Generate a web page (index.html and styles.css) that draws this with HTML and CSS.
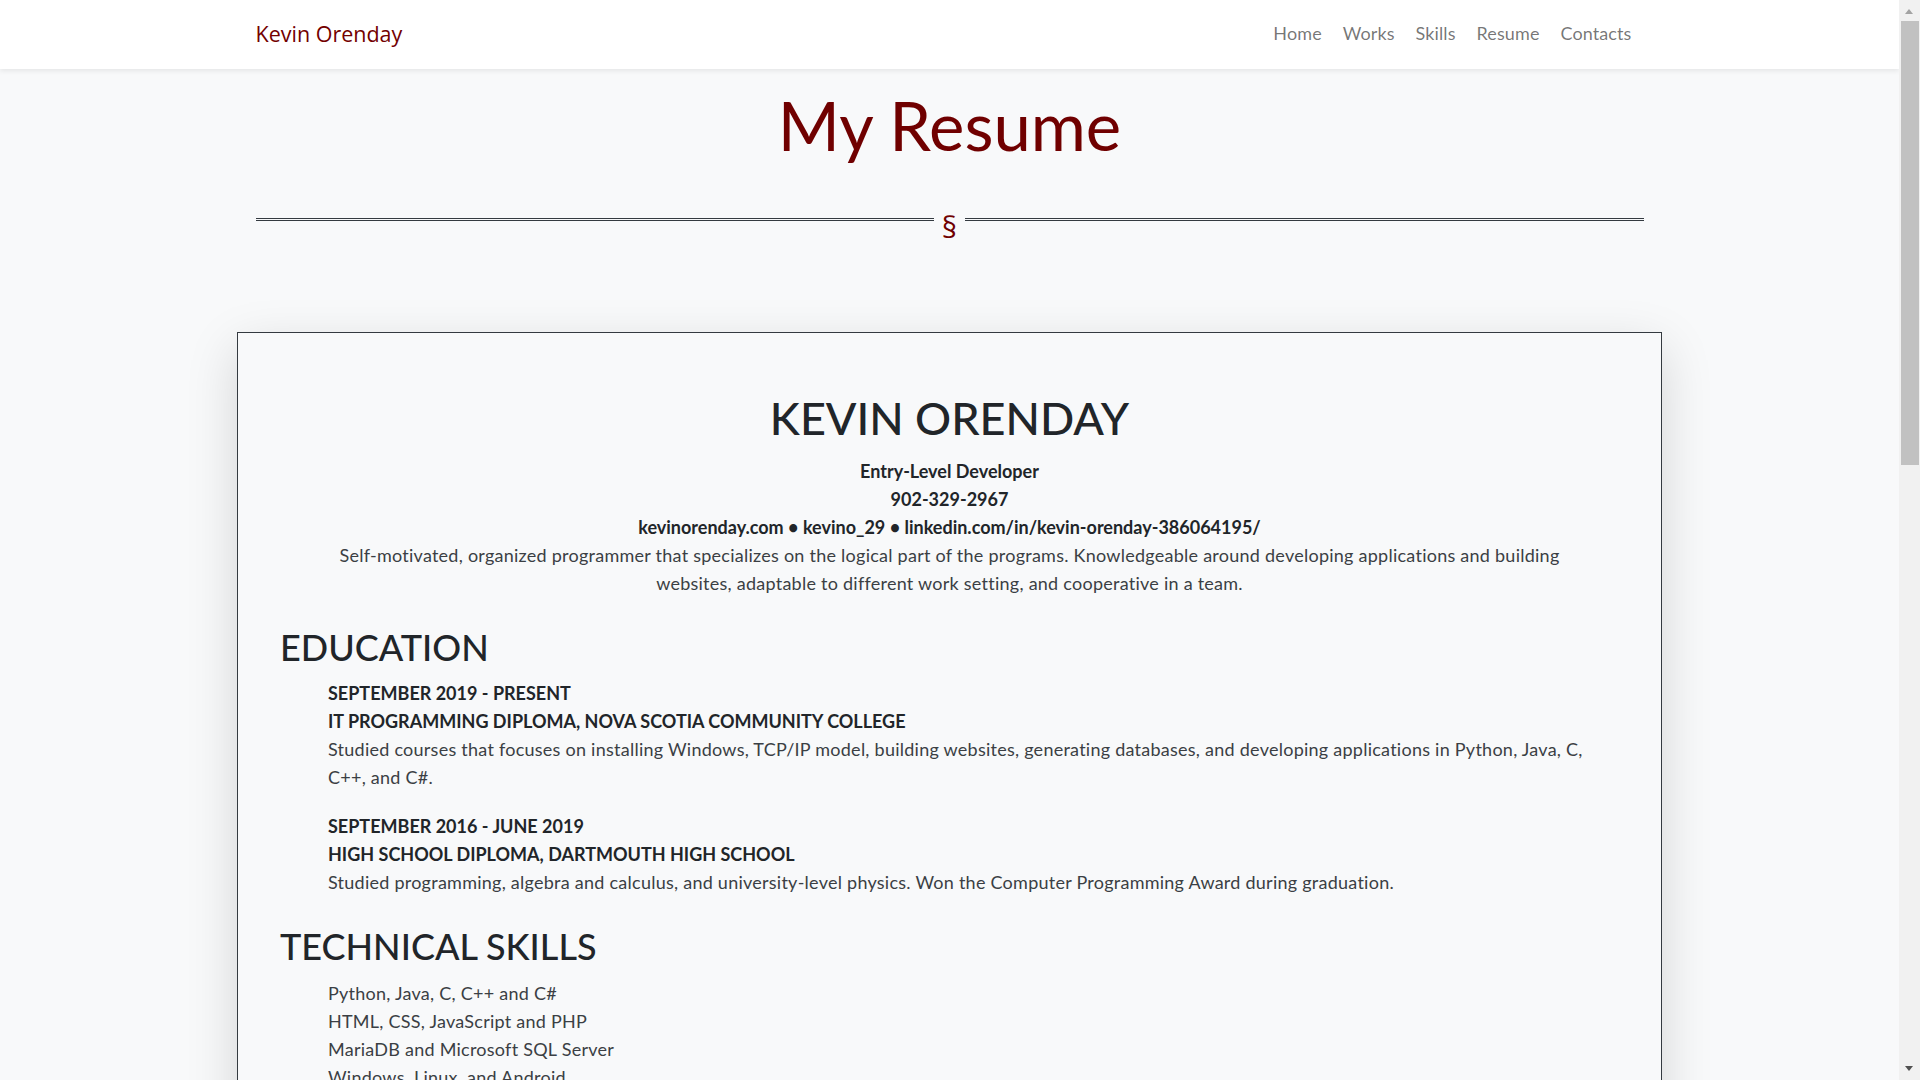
FILE: index.html
```html
<!DOCTYPE html>
<html lang="en">
<head>
<meta charset="utf-8">
<title>Kevin Orenday - Resume</title>
<link rel="stylesheet" href="styles.css">
</head>
<body>
<nav class="navbar">
  <div class="nav-inner">
    <a class="brand" href="#">Kevin Orenday</a>
    <ul class="nav-links">
      <li><a href="#">Home</a></li>
      <li><a href="#">Works</a></li>
      <li><a href="#">Skills</a></li>
      <li><a href="#">Resume</a></li>
      <li><a href="#">Contacts</a></li>
    </ul>
  </div>
</nav>

<header class="page-head">
  <h1 class="page-title">My Resume</h1>
  <div class="divider">
    <span class="divider-line"></span>
    <span class="divider-mark">§</span>
    <span class="divider-line"></span>
  </div>
</header>

<main>
  <article class="resume">
    <header class="resume-head">
      <h1 class="resume-name">KEVIN ORENDAY</h1>
      <p class="resume-info">Entry-Level Developer</p>
      <p class="resume-info">902-329-2967</p>
      <p class="resume-info">kevinorenday.com • kevino_29 • linkedin.com/in/kevin-orenday-386064195/</p>
      <p class="resume-summary">Self-motivated, organized programmer that specializes on the logical part of the programs. Knowledgeable around developing applications and building websites, adaptable to different work setting, and cooperative in a team.</p>
    </header>

    <section class="resume-section">
      <h2 class="section-title">EDUCATION</h2>
      <div class="entry">
        <h3 class="entry-head">SEPTEMBER 2019 - PRESENT</h3>
        <h3 class="entry-head">IT PROGRAMMING DIPLOMA, NOVA SCOTIA COMMUNITY COLLEGE</h3>
        <p class="entry-text">Studied courses that focuses on installing Windows, TCP/IP model, building websites, generating databases, and developing applications in Python, Java, C, C++, and C#.</p>
      </div>
      <div class="entry">
        <h3 class="entry-head">SEPTEMBER 2016 - JUNE 2019</h3>
        <h3 class="entry-head">HIGH SCHOOL DIPLOMA, DARTMOUTH HIGH SCHOOL</h3>
        <p class="entry-text">Studied programming, algebra and calculus, and university-level physics. Won the Computer Programming Award during graduation.</p>
      </div>
    </section>

    <section class="resume-section">
      <h2 class="section-title">TECHNICAL SKILLS</h2>
      <ul class="skill-list">
        <li>Python, Java, C, C++ and C#</li>
        <li>HTML, CSS, JavaScript and PHP</li>
        <li>MariaDB and Microsoft SQL Server</li>
        <li>Windows, Linux, and Android</li>
        <li>Git and GitHub</li>
        <li>Microsoft Office</li>
      </ul>
    </section>

    <section class="resume-section">
      <h2 class="section-title">WORK EXPERIENCE</h2>
      <div class="entry">
        <h3 class="entry-head">JUNE 2020 - AUGUST 2020</h3>
        <h3 class="entry-head">IT SUPPORT ASSISTANT, NOVA SCOTIA COMMUNITY COLLEGE</h3>
        <p class="entry-text">Assisted students and staff with software installation, network troubleshooting and maintenance of computer labs across the campus.</p>
      </div>
      <div class="entry">
        <h3 class="entry-head">JULY 2018 - AUGUST 2019</h3>
        <h3 class="entry-head">CUSTOMER SERVICE REPRESENTATIVE, DARTMOUTH</h3>
        <p class="entry-text">Handled customer inquiries, processed transactions and kept records organized while working in a fast-paced team environment.</p>
      </div>
    </section>

    <section class="resume-section">
      <h2 class="section-title">PROJECTS</h2>
      <div class="entry">
        <h3 class="entry-head">PERSONAL PORTFOLIO WEBSITE</h3>
        <h3 class="entry-head">HTML, CSS, JAVASCRIPT</h3>
        <p class="entry-text">Designed and built a responsive portfolio website to showcase works, skills, resume and contact information.</p>
      </div>
      <div class="entry">
        <h3 class="entry-head">INVENTORY MANAGEMENT APPLICATION</h3>
        <h3 class="entry-head">C#, MICROSOFT SQL SERVER</h3>
        <p class="entry-text">Developed a desktop application for tracking products, suppliers and orders with a relational database back end.</p>
      </div>
    </section>

    <section class="resume-section">
      <h2 class="section-title">INTERESTS</h2>
      <ul class="skill-list">
        <li>Game development</li>
        <li>Open source software</li>
        <li>Basketball</li>
      </ul>
    </section>
  </article>
</main>

<footer class="footer">
  <p>© 2020 Kevin Orenday</p>
</footer>

<div class="scrollbar" aria-hidden="true">
  <span class="sb-arrow sb-up"></span>
  <span class="sb-thumb"></span>
  <span class="sb-arrow sb-down"></span>
</div>
</body>
</html>
```

FILE: styles.css
```css
* {
  box-sizing: border-box;
}

html,
body {
  margin: 0;
  padding: 0;
}

body {
  background: #f8f9fa;
  color: #212529;
  font-family: Lato, "Noto Sans", sans-serif;
  font-size: 18px;
  line-height: 28px;
  padding-right: 21px;
}

/* ---------- navbar ---------- */
.navbar {
  background: #ffffff;
  height: 69px;
  box-shadow: 0 2px 5px rgba(0, 0, 0, 0.08);
  position: relative;
  z-index: 2;
}

.nav-inner {
  max-width: 1388px;
  height: 100%;
  margin: 0 auto;
  display: flex;
  align-items: center;
  justify-content: space-between;
}

.brand {
  font-family: "Open Sans", "Noto Sans", sans-serif;
  font-size: 21.5px;
  color: #730000;
  text-decoration: none;
  margin-top: -2px;
}

.nav-links {
  list-style: none;
  margin: -4px 0 0;
  padding: 0 12px 0 0;
  display: flex;
  gap: 21px;
}

.nav-links a {
  color: rgba(0, 0, 0, 0.55);
  text-decoration: none;
  font-size: 18px;
  letter-spacing: 0.1px;
}

/* ---------- page head ---------- */
.page-head {
  max-width: 1388px;
  margin: 0 auto;
  padding-top: 17px;
}

.page-title {
  margin: 0;
  text-align: center;
  font-size: 67px;
  line-height: 78px;
  font-weight: 400;
  color: #700000;
}

.divider {
  display: flex;
  align-items: flex-start;
  margin-top: 42px;
  height: 34px;
}

.divider-line {
  flex: 1;
  border-top: 3px double #343a40;
  margin-top: 12px;
}

.divider-mark {
  font-family: "Open Sans", "Noto Sans", sans-serif;
  font-size: 30px;
  line-height: 34px;
  color: #700000;
  margin: 4px 8px 0;
}

/* ---------- resume card ---------- */
.resume {
  width: 1425px;
  margin: 92px auto 110px;
  border: 1px solid #343a40;
  padding: 57px 42px 60px;
  background: #f8f9fa;
  box-shadow: 0 16px 48px rgba(0, 0, 0, 0.15);
}

.resume-head {
  text-align: center;
}

.resume-name {
  margin: 0 0 9px;
  font-size: 45px;
  line-height: 57.6px;
  font-weight: 500;
  color: #212529;
}

.resume-info {
  margin: 0;
  font-weight: 700;
  color: #212529;
}

.resume-summary {
  margin: 0;
  padding: 0 48px;
  color: #3b3f44;
  letter-spacing: 0.25px;
}

.section-title {
  margin: 29px 0 10.5px;
  font-size: 36px;
  line-height: 43.2px;
  font-weight: 500;
  color: #212529;
}

.entry {
  padding-left: 48px;
  margin-bottom: 21px;
}

.entry:last-child {
  margin-bottom: 0;
}

.entry-head {
  margin: 0;
  font-size: 18px;
  line-height: 28px;
  font-weight: 700;
  color: #212529;
}

.entry-text {
  margin: 0;
  color: #3b3f44;
  letter-spacing: 0.25px;
}

.skill-list {
  list-style: none;
  margin: 0;
  padding: 0 0 0 48px;
  color: #3b3f44;
  letter-spacing: 0.25px;
}

/* ---------- footer ---------- */
.footer {
  background: #ffffff;
  text-align: center;
  padding: 30px 0;
  color: rgba(0, 0, 0, 0.55);
  font-size: 16px;
}

.footer p {
  margin: 0;
}

/* ---------- window scrollbar (drawn over the page edge) ---------- */
.scrollbar {
  position: fixed;
  top: 0;
  right: 0;
  width: 21px;
  height: 100vh;
  background: #f1f1f1;
  z-index: 10;
}

.sb-thumb {
  position: absolute;
  top: 21px;
  left: 2px;
  right: 1px;
  height: 444px;
  background: #c1c1c1;
}

.sb-arrow {
  position: absolute;
  left: 6px;
  width: 0;
  height: 0;
  border-left: 4.5px solid transparent;
  border-right: 4.5px solid transparent;
}

.sb-up {
  top: 9px;
  border-bottom: 5px solid #a3a3a3;
}

.sb-down {
  bottom: 9px;
  border-top: 5px solid #505050;
}
```
